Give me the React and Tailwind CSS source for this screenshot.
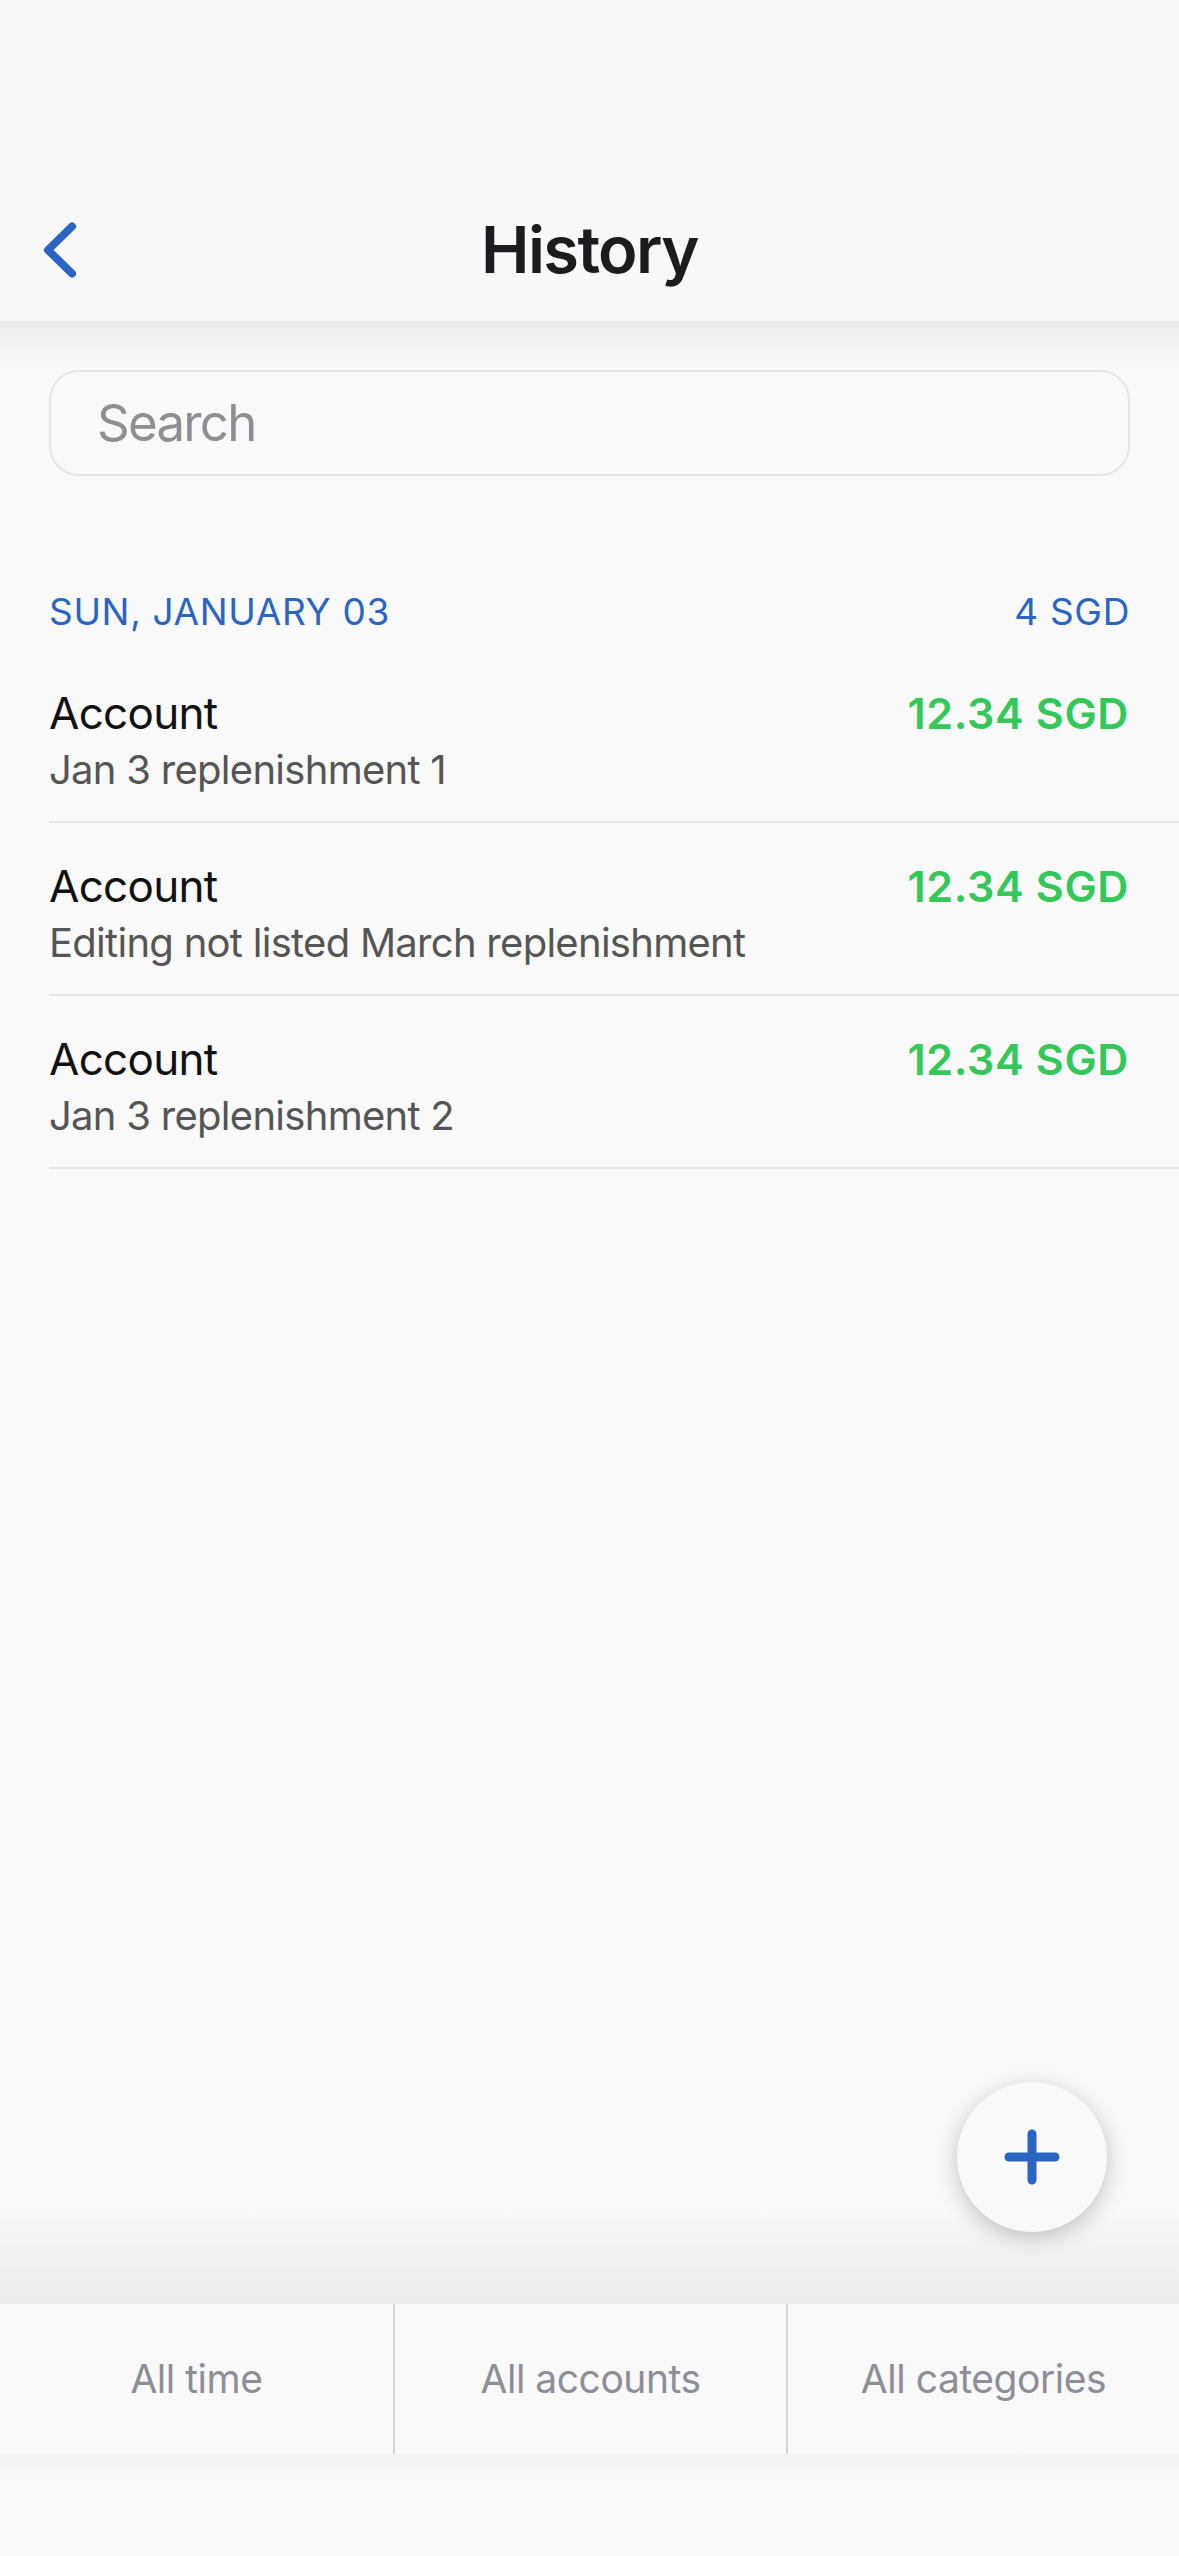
import React from 'react';

const rows = [
  { account: 'Account', note: 'Jan 3 replenishment 1', amount: '12.34 SGD' },
  { account: 'Account', note: 'Editing not listed March replenishment', amount: '12.34 SGD' },
  { account: 'Account', note: 'Jan 3 replenishment 2', amount: '12.34 SGD' },
];

const filters = ['All time', 'All accounts', 'All categories'];

function BackChevron() {
  return (
    <svg width="40" height="64" viewBox="0 0 40 64" fill="none">
      <path d="M32 8.5 L8 32 L32 55.5" stroke="#2b65c4" strokeWidth="8" strokeLinecap="round" strokeLinejoin="round" />
    </svg>
  );
}

function HistoryRow({ account, note, amount }) {
  return (
    <div className="ml-[49px] flex items-start justify-between border-b-2 border-[#e7e7e7] pr-[50px] pt-[37px] pb-[27px]">
      <div className="flex flex-col">
        <span className="text-[44px] leading-[53px] tracking-[-0.016em] text-[#111111]">{account}</span>
        <span className="mt-[6px] text-[40px] leading-[48px] tracking-[-0.018em] text-[#555555]">{note}</span>
      </div>
      <span className="text-[43px] leading-[53px] font-semibold tracking-[0.015em] text-[#34c759]">{amount}</span>
    </div>
  );
}

export default function App() {
  return (
    <div
      className="relative flex h-[2556px] w-[1179px] flex-col overflow-hidden bg-[#f9f9f9]"
      style={{ fontFamily: 'Inter, "Noto Sans", sans-serif' }}
    >
      {/* nav header */}
      <header className="relative z-10 flex h-[321px] flex-col justify-end bg-[#f8f8f8]">
        <div className="flex h-[142px] items-center">
          <div className="flex w-[200px] items-center pl-[40px]">
            <BackChevron />
          </div>
          <h1 className="flex-1 text-center text-[65px] font-semibold tracking-[-0.025em] text-[#1c1c1e]">History</h1>
          <div className="w-[200px]" />
        </div>
        <div className="pointer-events-none absolute left-0 right-0 top-full h-[45px] bg-gradient-to-b from-black/[0.06] to-transparent" />
      </header>

      <main className="flex flex-1 flex-col">
        <div className="mx-[49px] mt-[49px] flex h-[106px] items-center rounded-[30px] border-2 border-[#e6e6e6] pl-[46px]">
          <span className="text-[51px] tracking-[-0.035em] text-[#8e8e93]">Search</span>
        </div>

        <div className="mt-[113px] mb-[16px] flex justify-between px-[49px] text-[37px] leading-[45px] tracking-[0.018em] text-[#2b65c4]">
          <span>SUN, JANUARY 03</span>
          <span>4 SGD</span>
        </div>

        {rows.map((r, i) => (
          <HistoryRow key={i} {...r} />
        ))}
      </main>

      {/* add button */}
      <button className="absolute bottom-[324px] right-[72px] z-20 flex h-[150px] w-[150px] items-center justify-center rounded-full bg-[#f9f9f9] shadow-[0_6px_22px_rgba(0,0,0,0.22)]">
        <svg width="56" height="56" viewBox="0 0 56 56" fill="none">
          <path d="M28 5 V51 M5 28 H51" stroke="#2b65c4" strokeWidth="9" strokeLinecap="round" />
        </svg>
      </button>

      {/* filter bar */}
      <div className="relative grid h-[150px] grid-cols-3 bg-[#f9f9f9]">
        <div className="pointer-events-none absolute bottom-full left-0 right-0 h-[95px] bg-gradient-to-b from-transparent to-black/[0.06]" />
        <div className="pointer-events-none absolute left-0 right-0 top-full h-[28px] bg-gradient-to-b from-black/[0.02] to-transparent" />
        {filters.map((f, i) => (
          <div
            key={f}
            className={i === 0 ? 'flex items-center justify-center' : 'flex items-center justify-center border-l-2 border-[#d6d6d6]'}
          >
            <span className="text-[39px] tracking-[-0.012em] text-[#8e8e98]">{f}</span>
          </div>
        ))}
      </div>
      <div className="h-[102px]" />
    </div>
  );
}
